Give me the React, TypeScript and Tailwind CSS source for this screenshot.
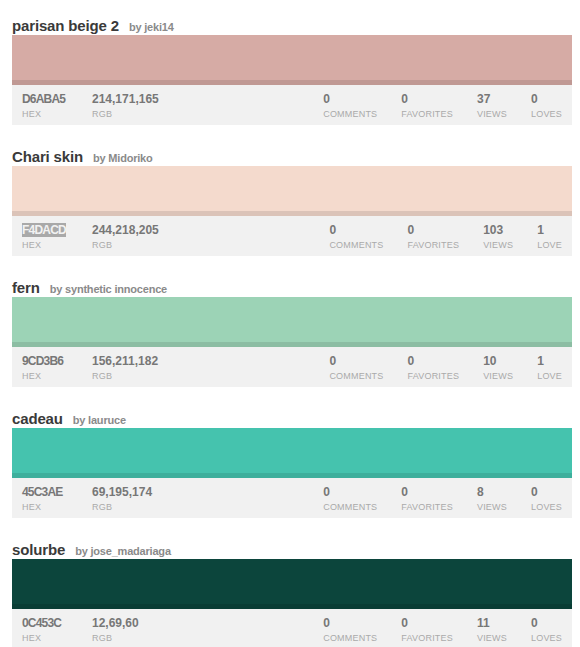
import React from "react";

interface Palette {
  title: string;
  author: string;
  hex: string;
  rgb: string;
  comments: number;
  favorites: number;
  views: number;
  loves: number;
  selected?: boolean;
}

const colors: Palette[] = [
  { title: "parisan beige 2", author: "jeki14", hex: "D6ABA5", rgb: "214,171,165", comments: 0, favorites: 0, views: 37, loves: 0 },
  { title: "Chari skin", author: "Midoriko", hex: "F4DACD", rgb: "244,218,205", comments: 0, favorites: 0, views: 103, loves: 1, selected: true },
  { title: "fern", author: "synthetic innocence", hex: "9CD3B6", rgb: "156,211,182", comments: 0, favorites: 0, views: 10, loves: 1 },
  { title: "cadeau", author: "lauruce", hex: "45C3AE", rgb: "69,195,174", comments: 0, favorites: 0, views: 8, loves: 0 },
  { title: "solurbe", author: "jose_madariaga", hex: "0C453C", rgb: "12,69,60", comments: 0, favorites: 0, views: 11, loves: 0 },
];

function Stat({ value, label }: { value: React.ReactNode; label: string }) {
  return (
    <div className="flex flex-col">
      <div className="text-[12px] leading-[14px] font-bold text-[#777777]">{value}</div>
      <div className="mt-[3px] text-[9px] leading-[11px] uppercase tracking-[0.2px] text-[#aaaaaa]">{label}</div>
    </div>
  );
}

function ColorCard({ c }: { c: Palette }) {
  return (
    <div>
      <div className="flex items-baseline h-[18px]">
        <span className="text-[15px] leading-[18px] font-bold tracking-[-0.15px] text-[#3a3a3a]">{c.title}</span>
        <span className="ml-[10px] text-[11px] font-bold tracking-[-0.2px] text-[#8a8a8a]">by {c.author}</span>
      </div>
      <div
        className="h-[50px] border-b-[5px] border-black/10"
        style={{ backgroundColor: "#" + c.hex }}
      />
      <div className="h-[40px] bg-[#f1f1f1] flex pl-[10px] pr-[10px] pt-[7px]">
        <div className="w-[70px]">
          <Stat
            value={
              c.selected ? (
                <span className="bg-[#a9a9a9] text-[#f2f2f2] tracking-[-0.8px]">{c.hex}</span>
              ) : (
                <span className="tracking-[-0.8px]">{c.hex}</span>
              )
            }
            label="HEX"
          />
        </div>
        <Stat value={c.rgb} label="RGB" />
        <div className="ml-auto flex gap-[24px]">
          <Stat value={c.comments} label="Comments" />
          <Stat value={c.favorites} label="Favorites" />
          <Stat value={c.views} label="Views" />
          <Stat value={c.loves} label={c.loves === 1 ? "Love" : "Loves"} />
        </div>
      </div>
    </div>
  );
}

export default function App() {
  return (
    <div className="w-[580px] min-h-[647px] bg-white pl-[12px] pr-[8px] pt-[17px] flex flex-col gap-[23px] font-['Liberation_Sans',Arial,sans-serif]">
      {colors.map((c) => (
        <ColorCard key={c.hex} c={c} />
      ))}
    </div>
  );
}
